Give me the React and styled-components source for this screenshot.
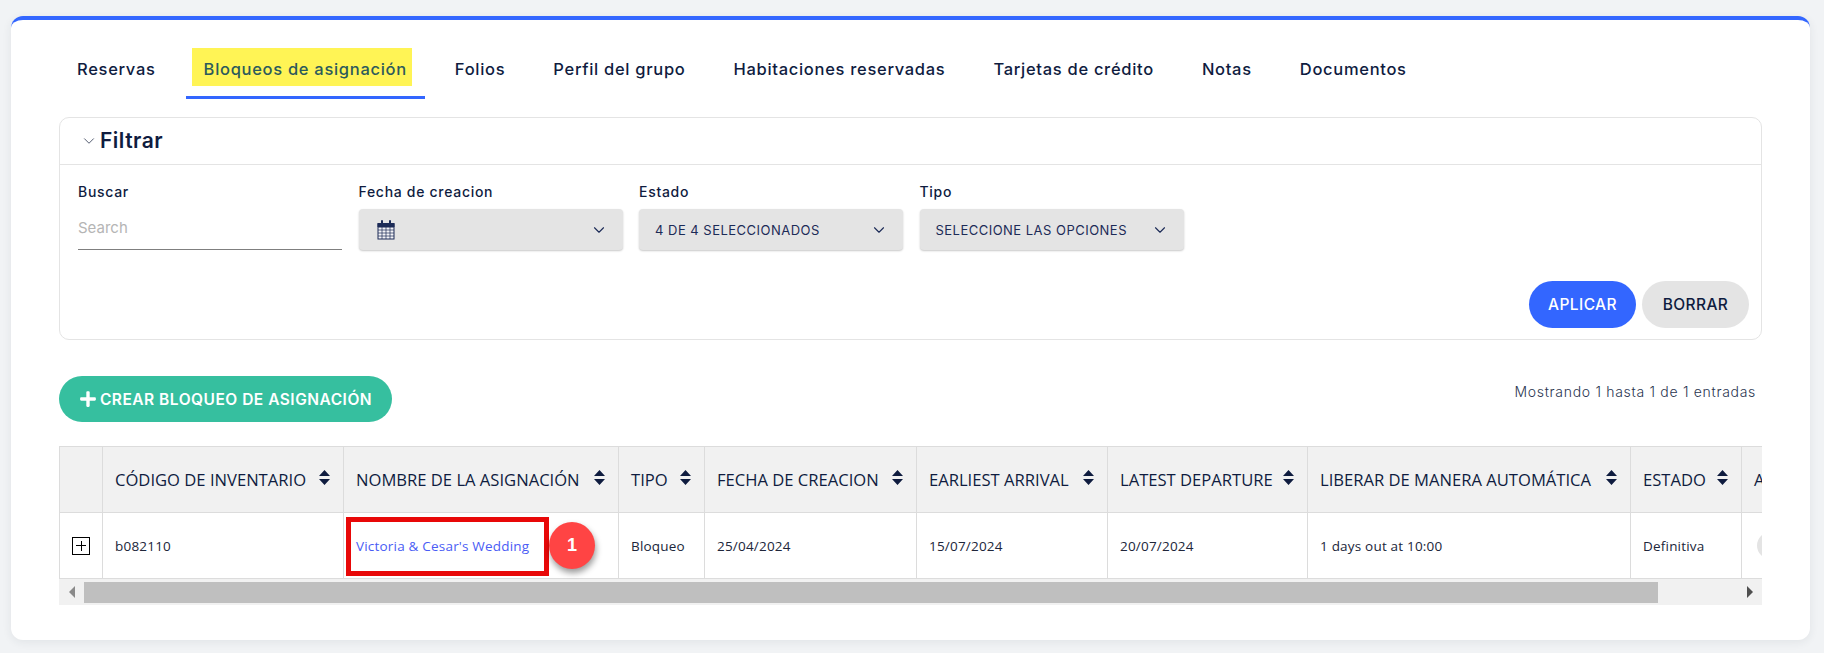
import React from "react";
import styled, { createGlobalStyle } from "styled-components";
import { ChevronDown } from "lucide-react";
import { FaPlus } from "react-icons/fa";

const GlobalStyle = createGlobalStyle`
  * { box-sizing: border-box; }
  body {
    margin: 0;
    background: #f1f3f5;
    font-family: "Inter", "Open Sans", sans-serif;
    color: #0f1c3f;
  }
`;

const TABS = [
  "Reservas",
  "Bloqueos de asignación",
  "Folios",
  "Perfil del grupo",
  "Habitaciones reservadas",
  "Tarjetas de crédito",
  "Notas",
  "Documentos",
];

const COLUMNS = [
  { width: 43 },
  { width: 241, title: "CÓDIGO DE INVENTARIO", value: "b082110" },
  { width: 275, title: "NOMBRE DE LA ASIGNACIÓN", link: "Victoria & Cesar's Wedding" },
  { width: 86, title: "TIPO", value: "Bloqueo" },
  { width: 212, title: "FECHA DE CREACION", value: "25/04/2024" },
  { width: 191, title: "EARLIEST ARRIVAL", value: "15/07/2024" },
  { width: 200, title: "LATEST DEPARTURE", value: "20/07/2024" },
  { width: 323, title: "LIBERAR DE MANERA AUTOMÁTICA", value: "1 days out at 10:00" },
  { width: 111, title: "ESTADO", value: "Definitiva" },
  { width: 120, title: "ACCIONES", action: true },
];

const CalendarIcon = () => (
  <CalendarSvg width="18" height="20" viewBox="0 0 18 20" fill="none" stroke="#1c2b57">
    <rect x="1" y="3.5" width="16" height="15.5" fill="#f4f4f8" />
    <path d="M1 3.5h16v3.5H1z" fill="#1c2b57" />
    <path d="M1 10h16M1 13h16M1 16h16M5 7v12M9 7v12M13 7v12" strokeOpacity="0.7" />
    <path d="M5 1v4M13 1v4" strokeWidth="2" strokeLinecap="round" />
  </CalendarSvg>
);

const SortIcon = () => (
  <SortSvg width="11" height="15" viewBox="0 0 11 15">
    <path d="M5.5 0l5.5 6H0zM5.5 15L0 9h11z" fill="#0f1c3f" />
  </SortSvg>
);

const App = () => (
  <>
    <GlobalStyle />
    <Page>
      <Card>
        <Tabs>
          {TABS.map((tab, i) => (
            <Tab key={tab} $active={i === 1}>
              {i === 1 ? <Highlight>{tab}</Highlight> : tab}
            </Tab>
          ))}
        </Tabs>

        <Panel>
          <PanelHeader>
            <ChevronDown size={18} strokeWidth={1.25} color="#4a5268" />
            <PanelTitle>Filtrar</PanelTitle>
          </PanelHeader>
          <PanelBody>
            <Filters>
              <Field>
                <Label>Buscar</Label>
                <SearchInput placeholder="Search" />
              </Field>
              <Field>
                <Label>Fecha de creacion</Label>
                <Select>
                  <CalendarIcon />
                  <ChevronDown size={18} strokeWidth={1.5} />
                </Select>
              </Field>
              <Field>
                <Label>Estado</Label>
                <Select>
                  <span>4 DE 4 SELECCIONADOS</span>
                  <ChevronDown size={18} strokeWidth={1.5} />
                </Select>
              </Field>
              <Field>
                <Label>Tipo</Label>
                <Select>
                  <span>SELECCIONE LAS OPCIONES</span>
                  <ChevronDown size={18} strokeWidth={1.5} />
                </Select>
              </Field>
            </Filters>
            <Actions>
              <PillButton $primary>APLICAR</PillButton>
              <PillButton>BORRAR</PillButton>
            </Actions>
          </PanelBody>
        </Panel>

        <Toolbar>
          <CreateButton>
            <FaPlus size={18} />
            CREAR BLOQUEO DE ASIGNACIÓN
          </CreateButton>
          <Counter>Mostrando 1 hasta 1 de 1 entradas</Counter>
        </Toolbar>

        <TableWrap>
          <Table>
            <colgroup>
              {COLUMNS.map((col, i) => (
                <col key={i} style={{ width: col.width }} />
              ))}
            </colgroup>
            <thead>
              <tr>
                {COLUMNS.map((col, i) => (
                  <Th key={i}>
                    {col.title && (
                      <HeadInner>
                        {col.title}
                        <SortIcon />
                      </HeadInner>
                    )}
                  </Th>
                ))}
              </tr>
            </thead>
            <tbody>
              <tr>
                {COLUMNS.map((col, i) => (
                  <Td key={i}>
                    {i === 0 && <ExpandBox />}
                    {col.value}
                    {col.link && (
                      <LinkCell>
                        <CellLink>{col.link}</CellLink>
                        <RedFrame />
                        <StepBadge>1</StepBadge>
                      </LinkCell>
                    )}
                    {col.action && <ActionPill />}
                  </Td>
                ))}
              </tr>
            </tbody>
          </Table>
          <ScrollBar>
            <ScrollArrow $side="left" />
            <ScrollTrack>
              <ScrollThumb />
            </ScrollTrack>
            <ScrollArrow $side="right" />
          </ScrollBar>
        </TableWrap>
      </Card>
    </Page>
  </>
);

export default App;

const Page = styled.div`
  padding: 16px 14px 12px 11px;
  height: 653px;
  overflow: hidden;
`;

const Card = styled.div`
  height: 624px;
  background: #fff;
  border-top: 4px solid #3366ff;
  border-radius: 12px;
  padding: 27px 48px 0;
  box-shadow: 0 2px 10px rgba(40, 50, 70, 0.08);
`;

const Tabs = styled.nav`
  display: flex;
  gap: 12px;
  height: 52px;
`;

const Tab = styled.div`
  display: flex;
  align-items: flex-start;
  padding: 12px 18px 0;
  height: 52px;
  font-size: 16.5px;
  font-weight: 500;
  letter-spacing: 0.7px;
  line-height: 20px;
  white-space: nowrap;
  border-bottom: 3px solid ${(props) => (props.$active ? "#3366ff" : "transparent")};
`;

const Highlight = styled.span`
  margin: -11px -5px 0 -12px;
  padding: 11px 5px 7px 12px;
  background: #fff455;
  color: #2c5a5c;
`;

const Panel = styled.section`
  margin-top: 18px;
  width: 1703px;
  height: 223px;
  border: 1px solid #e4e4e4;
  border-radius: 10px;
  display: flex;
  flex-direction: column;
`;

const PanelHeader = styled.header`
  height: 47px;
  flex: none;
  display: flex;
  align-items: center;
  gap: 2px;
  padding: 0 0 1px 20px;
  border-bottom: 1px solid #e4e4e4;
`;

const PanelTitle = styled.h2`
  margin: 0;
  font-size: 21px;
  font-weight: 600;
  letter-spacing: 0.5px;
`;

const PanelBody = styled.div`
  flex: 1;
  display: flex;
  flex-direction: column;
  justify-content: space-between;
  padding: 18px 12px 11px 18px;
`;

const Filters = styled.div`
  display: grid;
  grid-template-columns: repeat(4, 264px);
  column-gap: 16.5px;
`;

const Field = styled.div`
  display: flex;
  flex-direction: column;
  gap: 8px;
`;

const Label = styled.label`
  font-size: 14px;
  font-weight: 500;
  letter-spacing: 0.7px;
  line-height: 18px;
`;

const SearchInput = styled.input`
  height: 41px;
  border: 0;
  border-bottom: 1px solid #7f7f7f;
  outline: 0;
  padding: 0 0 4px;
  font: 400 15px "Inter", sans-serif;
  background: transparent;
  &::placeholder {
    color: #b5b5b5;
  }
`;

const Select = styled.div`
  height: 41px;
  background: #e4e4e4;
  border-radius: 4px;
  box-shadow: 0 1px 2px rgba(0, 0, 0, 0.22);
  display: flex;
  align-items: center;
  justify-content: space-between;
  padding: 0 15px 0 16px;
  font-size: 13px;
  font-weight: 400;
  letter-spacing: 0.48px;
  color: #1c2b57;
`;

const CalendarSvg = styled.svg`
  margin-left: 2px;
`;

const Actions = styled.div`
  display: flex;
  justify-content: flex-end;
  gap: 6px;
`;

const PillButton = styled.button`
  width: 107px;
  height: 47px;
  border: 0;
  border-radius: 24px;
  font: 500 15.5px "Inter", sans-serif;
  letter-spacing: 0.4px;
  background: ${(props) => (props.$primary ? "#3366ff" : "#e4e4e4")};
  color: ${(props) => (props.$primary ? "#fff" : "#0f1c3f")};
`;

const Toolbar = styled.div`
  margin-top: 36px;
  width: 1702px;
  display: flex;
  justify-content: space-between;
  align-items: flex-start;
`;

const CreateButton = styled.button`
  height: 46px;
  width: 333px;
  border: 0;
  border-radius: 23px;
  background: #36bf9f;
  color: #fff;
  font: 600 15.5px "Inter", sans-serif;
  letter-spacing: 0.5px;
  display: flex;
  align-items: center;
  justify-content: center;
  gap: 3px;
  white-space: nowrap;
`;

const Counter = styled.div`
  margin: 6px 5px 0 0;
  font-size: 14px;
  font-weight: 300;
  letter-spacing: 0.7px;
  line-height: 20px;
  color: #2a3550;
`;

const TableWrap = styled.div`
  margin-top: 24px;
  width: 1703px;
  overflow: hidden;
`;

const Table = styled.table`
  table-layout: fixed;
  width: 1802px;
  border-collapse: collapse;
  font-family: "Open Sans", sans-serif;
`;

const Th = styled.th`
  height: 66px;
  background: #f1f1f1;
  border: 1px solid #dcdcdc;
  padding: 0 13.5px 0 12px;
  text-align: left;
  font-size: 16.6px;
  font-weight: 400;
  color: #0f1c3f;
  white-space: nowrap;
`;

const HeadInner = styled.div`
  display: flex;
  align-items: center;
  justify-content: space-between;
`;

const SortSvg = styled.svg`
  flex: none;
  margin-top: -4px;
`;

const Td = styled.td`
  height: 66px;
  border: 1px solid #dcdcdc;
  padding: 0 12px;
  font-size: 13.5px;
  letter-spacing: 0.2px;
  color: #20263a;
  white-space: nowrap;
`;

const ExpandBox = styled.div`
  width: 18px;
  height: 18px;
  border: 1px solid #000;
  position: relative;
  &::before,
  &::after {
    content: "";
    position: absolute;
    background: #000;
  }
  &::before {
    left: 3px;
    right: 3px;
    top: 7.5px;
    height: 1px;
  }
  &::after {
    top: 3px;
    bottom: 3px;
    left: 7.5px;
    width: 1px;
  }
`;

const LinkCell = styled.div`
  position: relative;
`;

const CellLink = styled.span`
  color: #4a5cf5;
`;

const RedFrame = styled.div`
  position: absolute;
  left: -10px;
  top: -20px;
  width: 203px;
  height: 59px;
  border: 5px solid #e80808;
`;

const StepBadge = styled.div`
  position: absolute;
  left: 193px;
  top: -15px;
  width: 46px;
  height: 47px;
  border-radius: 50%;
  background: #ff4444;
  box-shadow: 1px 4px 6px rgba(0, 0, 0, 0.4);
  color: #fff;
  display: flex;
  align-items: center;
  justify-content: center;
  font: 700 18px "Liberation Sans", sans-serif;
`;

const ActionPill = styled.div`
  width: 60px;
  height: 27px;
  border-radius: 14px;
  background: #e4e4e4;
  margin-left: 3px;
`;

const ScrollBar = styled.div`
  height: 26px;
  background: #f1f1f1;
  display: flex;
  align-items: center;
`;

const ScrollArrow = styled.div`
  flex: none;
  width: 25px;
  display: flex;
  justify-content: center;
  &::before {
    content: "";
    border-top: 6px solid transparent;
    border-bottom: 6px solid transparent;
    ${(props) =>
      props.$side === "left"
        ? "border-right: 6px solid #8a8a8a;"
        : "border-left: 6px solid #4f4f4f;"}
  }
`;

const ScrollTrack = styled.div`
  flex: 1;
  height: 21px;
`;

const ScrollThumb = styled.div`
  width: 1574px;
  height: 100%;
  background: #bfbfbf;
`;
